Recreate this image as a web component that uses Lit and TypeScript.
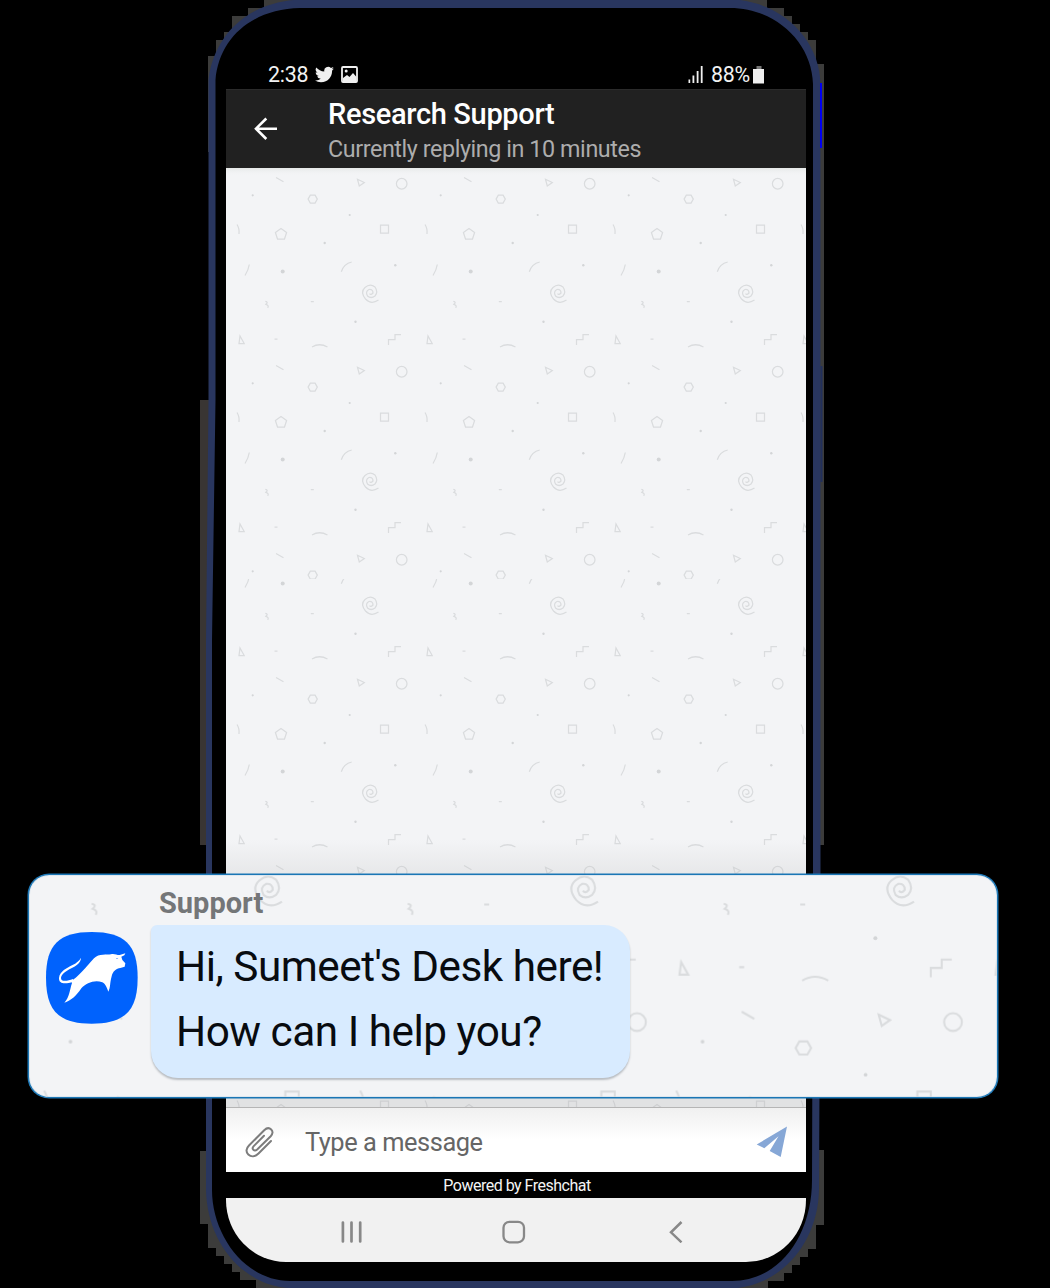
import { LitElement, html, css, svg } from "lit";
import { customElement } from "lit/decorators.js";

/* One 188 x 188 tile of the confetti wallpaper. */
const confetti = svg`
  <g fill="none" stroke="#dadcde" stroke-width="1.25">
    <path d="M50 9.500l7.500 4.300M131.500 11.300l6.800 3.200-5 3.400zM11 56.500q2.600 4 2 9.500M23.300 96.500q-1 6-4.300 11M115.300 103.700q2.500-8 10.400-9.700M39.300 133.300q3.400.6.6 3 3.400 1.200 1.800 3.600M84.800 133.700h3M13 175.500l1-7.500 4.200 7.500zM48.500 171h3M86 179q7.500-4.500 15.500 0M162.500 177v-5.500h6.500v-5h6"/>
    <circle cx="175.700" cy="15.700" r="5.300"/>
    <path d="M84.300 27.200h4.800l2.200 3.900-2.200 3.900h-4.800l-2.200-3.900zM154.500 57h8v8h-8zM55 60.400l5.600 4-2.100 6.600h-7l-2.100-6.600z"/>
    <path d="M152.500 132Q145 137 139.500 131 134 124 139 119.500 144 115 149 119 152.500 124 149 128 145 131 141.500 128 139 123.500 143 121.500 147 121 147 125 145 127.500 143.500 125.500"/>
  </g>
  <g fill="#d3d5d7">
    <circle cx="26.700" cy="27.300" r="1.100"/><circle cx="123.700" cy="47" r="1.100"/>
    <circle cx="98.700" cy="75" r="1.200"/><circle cx="56.700" cy="103.500" r="2"/>
    <circle cx="169.300" cy="97.300" r="1.200"/><circle cx="129.500" cy="153.700" r="1.200"/>
  </g>`;

@customElement("phone-frame")
class PhoneFrame extends LitElement {
  static styles = css`
    :host { display: block; width: 1050px; height: 1288px; }
    svg { display: block; }
  `;
  render() {
    return html`<svg width="1050" height="1288" viewBox="0 0 1050 1288">
      <g fill="#3c3c3b">
        <path d="M264 0v8h-16v8h-16v16h-8v8h-8v16h-8v96h100V0z"/>
        <path d="M767 0v8h17v8h8v8h8v8h8v8h8v24h8v781h-100V0z"/>
        <path d="M200 400h10v445h-10z" fill="#393533"/>
        <path d="M200 1151v73h8v24h8v8h8v8h8v8h8v8h16v8h50v-137z"/>
        <path d="M824 1150v75h-8v24h-8v8h-8v8h-8v8h-8v8h-16v7h-50v-138z"/>
      </g>
      <path d="M294 0H740C786 6 820 42 820.500 84V880L819 1190C818 1240 785 1282 738 1288H288C240 1284 207 1240 206 1190V640L208.500 400V80C214 34 248 4 294 0Z" fill="#29365f"/>
      <path d="M300 8H730C775 8 812 42 813 84V880L812 1180C812 1235 780 1281 732 1281H290C245 1281 212 1235 212 1190V640L215.500 400V80C219 38 252 9 300 8Z" fill="#000"/>
      <path d="M820 83h2v65h-2z" fill="#0000f2"/>
      <path d="M821.500 366v116" stroke="#22305c" stroke-width="2"/>
    </svg>`;
  }
}

@customElement("status-bar")
class StatusBar extends LitElement {
  static styles = css`
    :host { display: flex; align-items: flex-start; height: 29px; padding: 0 41px 0 42px; color: #f2f2f2;
      font: 21.400px/31px Roboto, sans-serif; letter-spacing: -0.250px; box-sizing: border-box; }
    .left, .right { display: flex; align-items: center; height: 29px; }
    .right { margin-left: auto; }
    .bird { margin-left: 7px; }
    .photo { margin-left: 7px; }
    .signal { margin-right: 7px; }
    .battery { margin-left: 3px; }
    svg { display: block; }
  `;
  render() {
    return html`
      <div class="left"><span>2:38</span>
        <svg class="bird" width="19" height="17" viewBox="0 2 24 20" fill="#f0f0f0"><path d="M23.950 4.570a10 10 0 0 1-2.820.780 4.960 4.960 0 0 0 2.160-2.730c-.95.560-2 .960-3.130 1.190a4.920 4.920 0 0 0-8.380 4.480C7.690 8.100 4.070 6.130 1.640 3.160a4.920 4.920 0 0 0 1.520 6.570 4.900 4.900 0 0 1-2.230-.61v.06a4.920 4.920 0 0 0 3.950 4.830 5 5 0 0 1-2.210.08 4.940 4.940 0 0 0 4.600 3.420A9.870 9.870 0 0 1 0 19.540a14 14 0 0 0 7.550 2.210c9.050 0 14-7.500 14-13.980l-.02-.64a9.940 9.940 0 0 0 2.420-2.560z"/></svg>
        <svg class="photo" width="17" height="17" viewBox="0 0 17 17"><rect x="1" y="1" width="15" height="15" rx="1" fill="none" stroke="#f0f0f0" stroke-width="1.800"/><path d="M2 15V12l4-3 2.500 2L12 7l3.500 4V15z" fill="#f0f0f0"/><circle cx="5.200" cy="5" r="1.500" fill="#f0f0f0"/></svg>
      </div>
      <div class="right">
        <svg class="signal" width="16" height="17" viewBox="0 0 16 17" fill="#f0f0f0"><path d="M.5 13.500h1.700V17H.5zM4.500 9.500h1.800V17H4.500zM8.700 5h1.800v12H8.700zM12.800 0h1.800v17h-1.800z"/></svg>
        <span>88%</span>
        <svg class="battery" width="12" height="18" viewBox="0 0 12 18"><path d="M3.500 0h5v3h-5z" fill="#777"/><path d="M0 3h11v14.500H0z" fill="#f0f0f0"/></svg>
      </div>`;
  }
}

@customElement("chat-header")
class ChatHeader extends LitElement {
  static styles = css`
    :host { display: flex; box-sizing: border-box; height: 79px; background: #212121; padding-left: 28px; border-top: 1px solid #2b2b2b;
      font-family: Roboto, sans-serif; }
    .back { margin: 27px 50px 0 0; flex: none; }
    .titles { display: flex; flex-direction: column; padding-top: 8px; white-space: nowrap; }
    .title { font-size: 29px; line-height: 33px; font-weight: 500; letter-spacing: -0.330px; color: #fff; }
    .sub { font-size: 23.300px; line-height: 26px; letter-spacing: -0.410px; color: #adadad; margin-top: 5px; }
  `;
  render() {
    return html`
      <svg class="back" width="24" height="24" viewBox="0 0 24 24" fill="none" stroke="#fff" stroke-width="2.600"><path d="M23 11.700H2M12.300 1.500L2 11.700 12.300 22"/></svg>
      <div class="titles"><span class="title">Research Support</span><span class="sub">Currently replying in 10 minutes</span></div>`;
  }
}

@customElement("chat-wall")
class ChatWall extends LitElement {
  static styles = css`
    :host { display: block; height: 939px; background: #f3f4f6; }
    svg { display: block; }
  `;
  render() {
    return html`<svg width="580" height="939" viewBox="0 0 580 939">
      <defs>
        <pattern id="upper" width="188" height="188" patternUnits="userSpaceOnUse">${confetti}</pattern>
        <pattern id="lower" width="188" height="188" patternUnits="userSpaceOnUse" patternTransform="translate(0 -64)">${confetti}</pattern>
        <linearGradient id="top" x2="0" y2="1"><stop stop-color="#e6e9e8"/><stop offset="1" stop-color="#f3f4f6" stop-opacity="0"/></linearGradient>
        <linearGradient id="low" x2="0" y2="1"><stop stop-color="#bbb" stop-opacity="0"/><stop offset="1" stop-color="#bbb" stop-opacity=".22"/></linearGradient>
      </defs>
      <rect width="580" height="411" fill="url(#upper)"/>
      <rect y="411" width="580" height="528" fill="url(#lower)"/>
      <rect width="580" height="8" fill="url(#top)"/>
      <rect y="672" width="580" height="35" fill="url(#low)"/>
      <rect y="920" width="580" height="19" fill="#aaa" opacity=".25"/>
    </svg>`;
  }
}

@customElement("message-input")
class MessageInput extends LitElement {
  static styles = css`
    :host { display: flex; align-items: center; box-sizing: border-box; height: 65px; padding: 4px 18px 0 18px; border-top: 1px solid #b5b5b5;
      background: linear-gradient(#f0f0f0, #fff 32px); font: 25.400px/30px Roboto, sans-serif; letter-spacing: -0.450px; color: #666; }
    .clip { margin-right: 29px; }
    .send { margin-left: auto; }
    svg { display: block; }
  `;
  render() {
    return html`
      <svg class="clip" width="32" height="34" viewBox="0 0 32 34" fill="none" stroke="#7d7d7d" stroke-width="2" stroke-linecap="round"><path d="M27 16L14.500 28.500C11 32 7 32 4.300 29.500 1.700 27 2 23.500 5 20.500L20.200 5.200C22.500 3 25.200 2.600 27.200 4.400 29.200 6.300 28.800 9 26.700 11.200L13.200 24.500C11.800 25.700 10.300 25.700 9.300 24.700 8.300 23.600 8.500 22.300 9.700 21.100L20 10.800"/></svg>
      <span>Type a message</span>
      <svg class="send" width="32" height="32" viewBox="0 0 32 32" fill="#86a7d6"><path d="M31 .5L.7 18.500 8.300 22.200 22.500 10.200 13.700 25 24.700 31z"/></svg>`;
  }
}

@customElement("nav-bar")
class NavBar extends LitElement {
  static styles = css`
    :host { display: grid; grid-template-columns: 250px 75px 255px; height: 64px; background: #f1f1f1; align-items: center;
      border-radius: 0 0 60px 60px / 0 0 62px 62px; overflow: hidden; }
    svg { display: block; margin-top: 4px; }
    .recent { justify-self: end; margin-right: 113px; }
    .home { justify-self: center; }
    .back { margin-left: 118px; }
  `;
  render() {
    return html`
      <svg class="recent" width="22" height="22" viewBox="0 0 22 22" stroke="#888" stroke-width="2.700" stroke-linecap="round"><path d="M1.900 1.500v19M10.500 1.500v19M19.200 1.500v19"/></svg>
      <svg class="home" width="24" height="24" viewBox="0 0 24 24" fill="none" stroke="#888" stroke-width="2.300"><rect x="1.500" y="1.800" width="20.500" height="20.500" rx="6"/></svg>
      <svg class="back" width="14" height="22" viewBox="0 0 14 22" fill="none" stroke="#888" stroke-width="2.500"><path d="M12.500 1L2 11.300l10.500 10"/></svg>`;
  }
}

@customElement("support-callout")
class SupportCallout extends LitElement {
  static styles = css`
    :host { display: grid; grid-template: 1fr / 1fr; box-sizing: border-box; width: 970px; height: 224px; border: 1px solid #1a76b5;
      box-shadow: 0 0 0 0.500px #1a76b5, inset 0 0 1px #1a76b5;
      border-radius: 21px; background: #f3f4f6; overflow: hidden; font-family: Roboto, sans-serif; }
    .paper, .row { grid-area: 1 / 1; }
    .row { display: flex; }
    svg { display: block; }
    .avatar { margin: 56px 12px 0 16px; flex: none; }
    .name { height: 50px; box-sizing: border-box; padding: 12px 0 0 8px; font-size: 29px; line-height: 33px; font-weight: 700; color: #747678; }
    .bubble { box-sizing: border-box; width: 479px; height: 153px; padding: 9px 0 0 25px; background: #d8ebff; border-radius: 6px 26px 27px 27px;
      box-shadow: 0 2px 2px #b9bdc2; font-size: 42.300px; letter-spacing: -0.490px; line-height: 65px; color: #080b10; white-space: nowrap; }
    .line { display: block; }
  `;
  render() {
    return html`
      <svg class="paper" width="968" height="222" viewBox="29 875 968 222">
        <defs><pattern id="big" width="188" height="188" patternUnits="userSpaceOnUse" patternTransform="translate(25.600 679.700) scale(1.681)">${confetti}</pattern></defs>
        <rect x="29" y="875" width="968" height="222" fill="url(#big)"/>
      </svg>
      <div class="row">
        <svg class="avatar" width="94" height="94" viewBox="16 34 282 282">
          <path d="M156 37C255 37 294 75 294 174S255 312 156 312 19 273 19 174 58 37 156 37z" fill="#0062fd"/>
          <path d="M100 186C80 193 57 195 58 175 60 155 82 145 97 137 111 130 119 123 124 114 123 128 113 136 101 143 86 151 66 160 64 174 63 187 82 185 100 178z" fill="#fff"/>
          <path d="M94 184C112 176 140 142 163 116 178 101 202 106 214 104 222 100 233 107 240 106L257 101 254 107 245 111 248 121 257 131 255 141 242 145C230 146 219 155 216 170 210 190 213 204 206 216 202 206 199 194 188 188 165 179 140 190 125 206 110 228 95 243 74 249 90 232 90 211 97 190z" fill="#fff"/>
          <path d="M230 115l6 3-5 0z" fill="#0062fd"/>
        </svg>
        <div>
          <div class="name">Support</div>
          <div class="bubble"><span class="line">Hi, Sumeet's Desk here!</span><span class="line">How can I help you?</span></div>
        </div>
      </div>`;
  }
}

@customElement("app-root")
class AppRoot extends LitElement {
  static styles = css`
    :host { display: grid; grid-template: 1288px / 1050px; background: #000; overflow: hidden; }
    .frame, .screen { grid-area: 1 / 1; }
    .screen { display: flex; flex-direction: column; width: 580px; margin-left: 226px; padding-top: 60px; z-index: 1; }
    .powered { height: 26px; padding-left: 2px; color: #f4f4f4; text-align: center; font: 16px/28px Roboto, sans-serif; letter-spacing: -0.500px; }
    .callout { position: absolute; left: 28px; top: 874px; z-index: 2; }
  `;
  render() {
    return html`
      <phone-frame class="frame"></phone-frame>
      <div class="screen">
        <status-bar></status-bar>
        <chat-header></chat-header>
        <chat-wall></chat-wall>
        <message-input></message-input>
        <div class="powered">Powered by Freshchat</div>
        <nav-bar></nav-bar>
      </div>
      <support-callout class="callout"></support-callout>`;
  }
}
